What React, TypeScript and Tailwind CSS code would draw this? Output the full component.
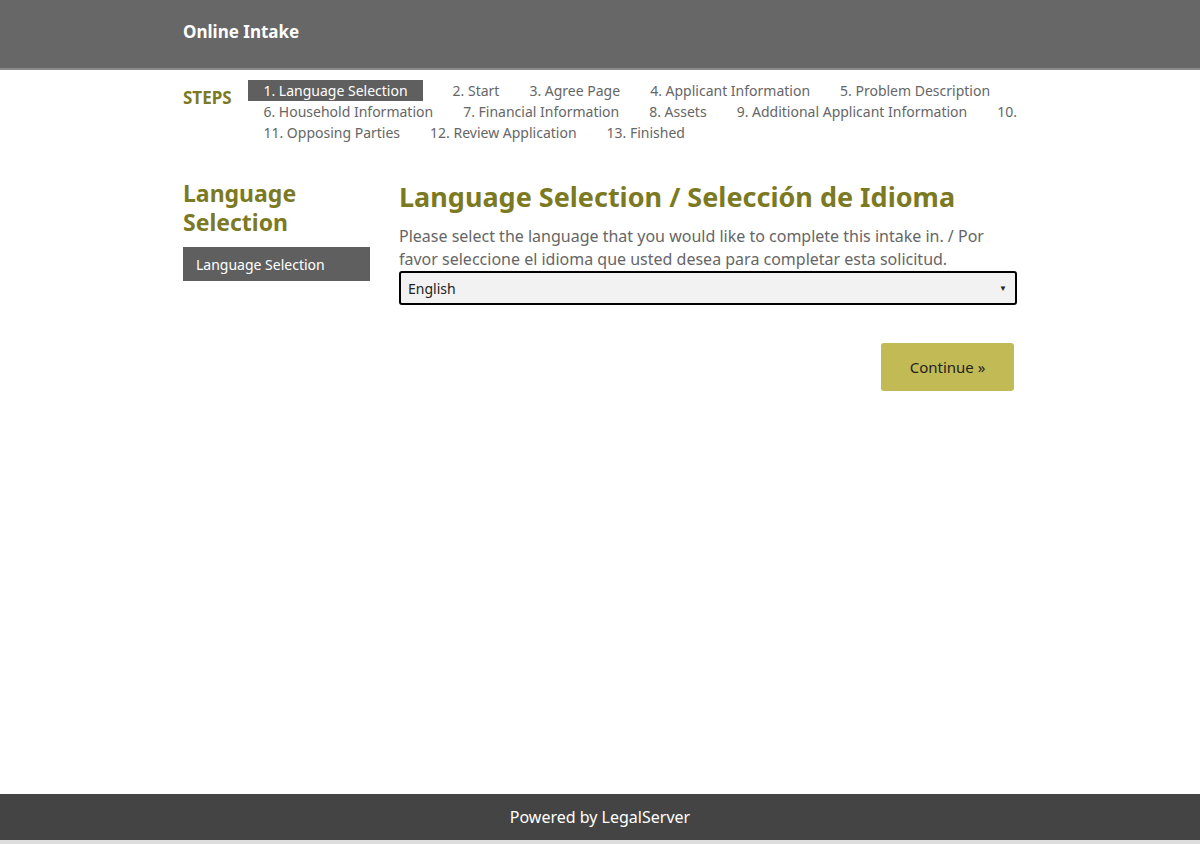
import React from "react";

const steps1 = ["2. Start", "3. Agree Page", "4. Applicant Information", "5. Problem Description"];
const steps2 = ["6. Household Information", "7. Financial Information", "8. Assets", "9. Additional Applicant Information", "10."];
const steps3 = ["11. Opposing Parties", "12. Review Application", "13. Finished"];

export default function App() {
  return (
    <div className="min-h-[844px] flex flex-col bg-white font-[family-name:'Liberation_Sans',Arial,sans-serif]">
      <header className="h-[70px] bg-[#676767] border-b-2 border-[#8a8a8a] flex items-center">
        <div className="w-[834px] mx-auto pb-1 text-white text-[17px] font-bold font-[family-name:'DejaVu_Serif',serif]">Online Intake</div>
      </header>
      <div className="w-[834px] mx-auto flex pt-[10px] text-[14px] text-[#666] whitespace-nowrap">
        <div className="w-[81px] pt-[5px] text-[#7b7a22] font-bold text-[17px] font-[family-name:'Liberation_Serif',serif]">STEPS</div>
        <div className="flex-1 leading-[21px]">
          <div className="flex gap-[30px]">
            <span className="bg-[#5f5f5f] text-white px-[15px]">1. Language Selection</span>
            {steps1.map((s) => <span key={s}>{s}</span>)}
          </div>
          <div className="flex gap-[30px] pl-[15px]">
            {steps2.map((s) => <span key={s}>{s}</span>)}
          </div>
          <div className="flex gap-[30px] pl-[15px]">
            {steps3.map((s) => <span key={s}>{s}</span>)}
          </div>
        </div>
      </div>
      <main className="w-[834px] mx-auto flex gap-[29px] pt-[36px] flex-1">
        <aside className="w-[187px]">
          <h2 className="text-[#7b7a22] font-bold text-[23px] leading-[29px] font-[family-name:'DejaVu_Serif',serif]">Language Selection</h2>
          <div className="mt-[10px] bg-[#5f5f5f] text-white text-[14px] px-[13px] h-[34px] flex items-center">Language Selection</div>
        </aside>
        <section className="flex-1">
          <h1 className="text-[#7b7a22] font-bold text-[27px] leading-[36px] font-[family-name:'DejaVu_Serif',serif]">Language Selection / Selección de Idioma</h1>
          <p className="mt-[10px] text-[#666] text-[16px] leading-[23px] font-[family-name:'Open_Sans',sans-serif]">Please select the language that you would like to complete this intake in. / Por favor seleccione el idioma que usted desea para completar esta solicitud.</p>
          <div className="h-[34px] border-2 border-black rounded-[3px] bg-[#f2f2f2] flex items-center justify-between px-[7px] text-[14px] text-[#222] font-[family-name:'Open_Sans',sans-serif]">
            <span>English</span>
            <span className="text-[8px] mr-[1px]">▼</span>
          </div>
          <div className="flex justify-end mt-[38px] pr-[3px]">
            <button className="w-[133px] h-[48px] bg-[#c2bb55] rounded-[3px] text-[#222] text-[15px] font-[family-name:'DejaVu_Serif',serif]">Continue »</button>
          </div>
        </section>
      </main>
      <footer className="h-[50px] bg-[#444] border-b-4 border-[#ddd] flex items-center justify-center text-white text-[16px] mt-[1px]">Powered by LegalServer</footer>
    </div>
  );
}
